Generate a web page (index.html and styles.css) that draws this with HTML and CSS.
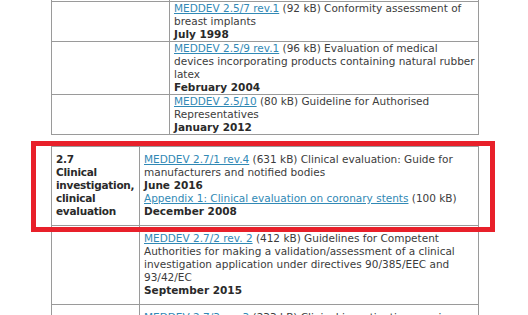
FILE: index.html
```html
<!DOCTYPE html>
<html lang="en">
<head>
<meta charset="utf-8">
<title>MEDDEV guidance</title>
<link rel="stylesheet" href="styles.css">
</head>
<body>
<div class="page">
  <table class="docs docs-top">
    <colgroup><col class="col-topic"><col></colgroup>
    <tr>
      <td class="topic"></td>
      <td class="entry"><a href="#">MEDDEV 2.5/6 rev.1</a> (60 kB) Homogenous batches<br><b>February 1998</b></td>
    </tr>
    <tr>
      <td class="topic"></td>
      <td class="entry"><a href="#">MEDDEV 2.5/7 rev.1</a> (92 kB) Conformity assessment of breast implants<br><b>July 1998</b></td>
    </tr>
    <tr>
      <td class="topic"></td>
      <td class="entry"><a href="#">MEDDEV 2.5/9 rev.1</a> (96 kB) Evaluation of medical devices incorporating products containing natural rubber latex<br><b>February 2004</b></td>
    </tr>
    <tr>
      <td class="topic"></td>
      <td class="entry"><a href="#">MEDDEV 2.5/10</a> (80 kB) Guideline for Authorised Representatives<br><b>January 2012</b></td>
    </tr>
  </table>

  <div class="section">
    <table class="docs docs-main">
      <colgroup><col class="col-topic"><col></colgroup>
      <tr>
        <td class="topic"><b>2.7<br>Clinical investigation, clinical evaluation</b></td>
        <td class="entry"><a href="#">MEDDEV 2.7/1 rev.4</a> (631 kB) Clinical evaluation: Guide for manufacturers and notified bodies<br><b>June 2016</b><br><a href="#">Appendix 1: Clinical evaluation on coronary stents</a> (100 kB)<br><b>December 2008</b></td>
      </tr>
      <tr>
        <td class="topic"></td>
        <td class="entry"><a href="#">MEDDEV 2.7/2 rev. 2</a> (412 kB) Guidelines for Competent Authorities for making a validation/assessment of a clinical investigation application under directives 90/385/EEC and 93/42/EC<br><b>September 2015</b></td>
      </tr>
      <tr>
        <td class="topic"></td>
        <td class="entry"><a href="#">MEDDEV 2.7/3 rev.3</a> (233 kB) Clinical investigations: serious adverse event reporting<br><b>May 2015</b></td>
      </tr>
    </table>
    <div class="highlight"></div>
  </div>
</div>
</body>
</html>
```

FILE: styles.css
```css
html, body {
  margin: 0;
  padding: 0;
  background: #ffffff;
  overflow: hidden;
}

.page {
  padding-left: 51px;
  font-family: "DejaVu Sans", Verdana, sans-serif;
  font-size: 10.5px;
  line-height: 13px;
  color: #3c3c3c;
}

.docs {
  border-collapse: collapse;
  table-layout: fixed;
  width: 428px;
}

.docs td {
  border: 1px solid #9a9a9a;
  vertical-align: top;
}

.docs a {
  color: #3189b5;
  text-decoration: underline;
}

.docs b {
  color: #2a2a2a;
}

.docs-top {
  margin-top: -26px;
}

.docs-top .col-topic {
  width: 118px;
}

.docs-top td {
  padding: 0;
}

.docs-top .entry {
  padding: 0 1px 0 4px;
}

.section {
  position: relative;
  margin-top: 11px;
}

.docs-main .col-topic {
  width: 88px;
}

.docs-main td {
  padding: 6px 3px 7px 4px;
}

.docs-main .topic {
  padding-left: 4px;
  padding-right: 0;
  letter-spacing: -0.25px;
}

.highlight {
  position: absolute;
  left: -20px;
  top: -5px;
  width: 464px;
  height: 91px;
  box-sizing: border-box;
  border: 5px solid #e8202a;
  pointer-events: none;
}
```
